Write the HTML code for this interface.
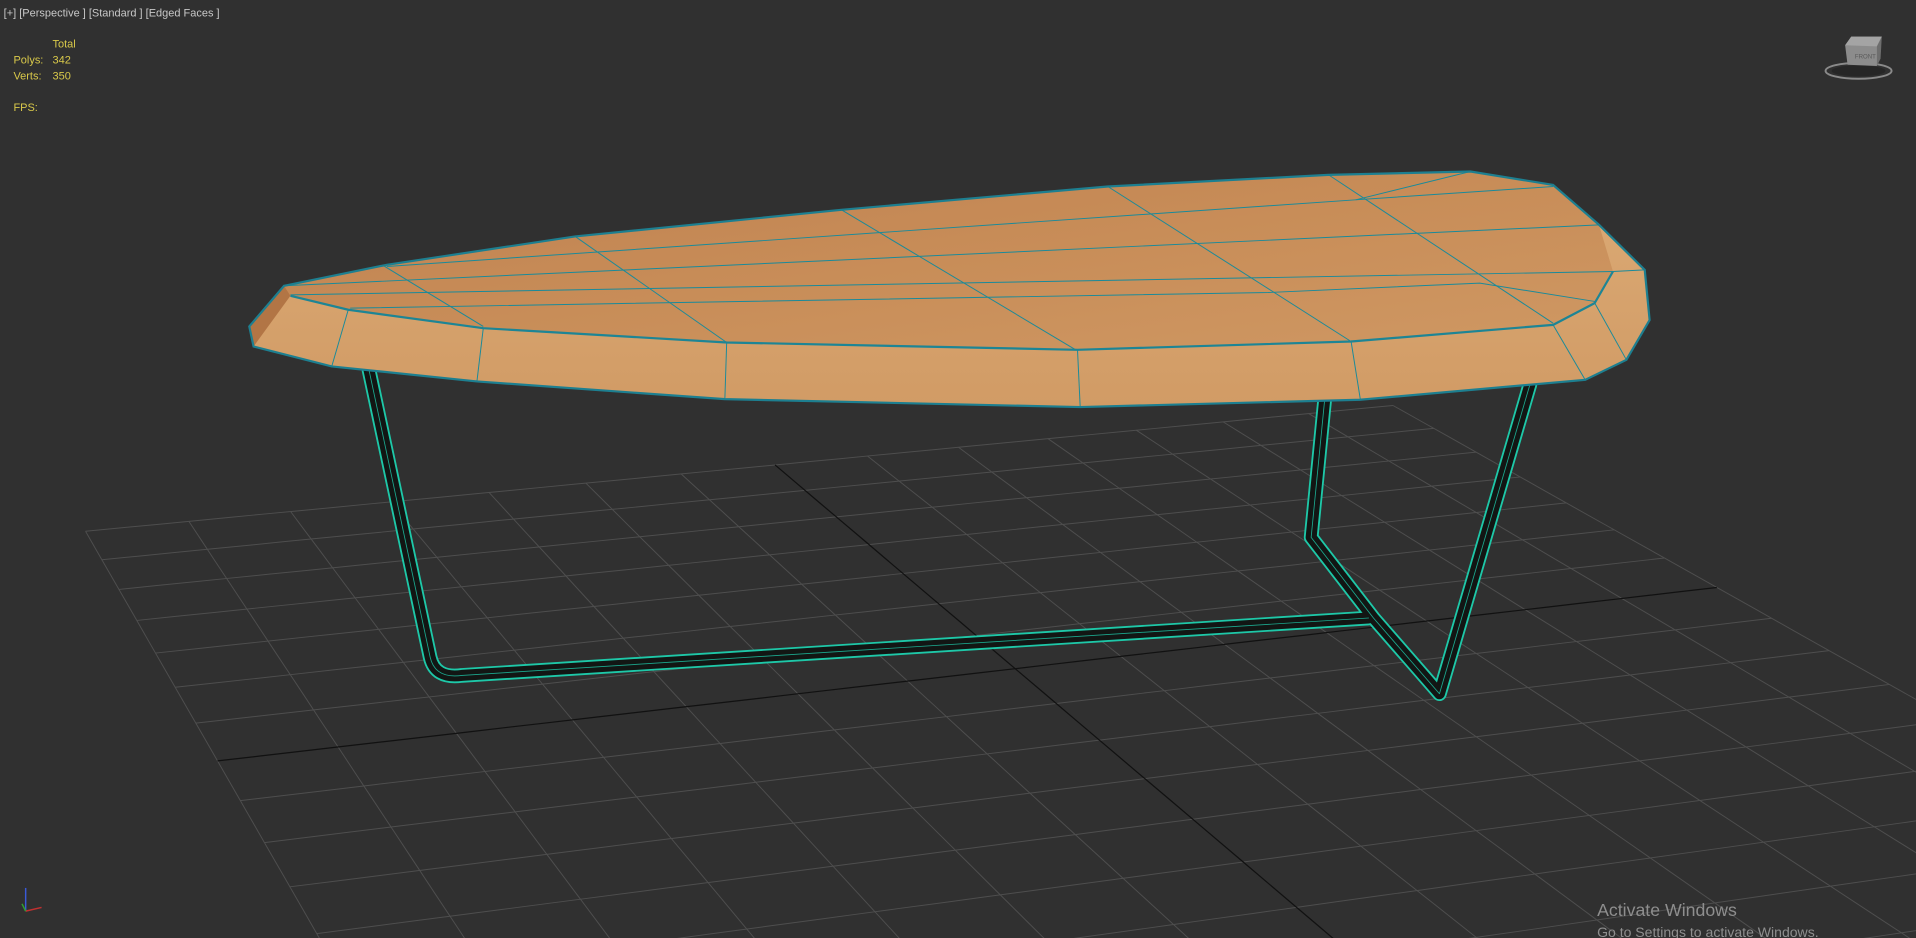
<!DOCTYPE html>
<html><head><meta charset="utf-8"><style>
html,body{margin:0;padding:0;background:#303030;overflow:hidden;width:1916px;height:938px}
svg{display:block}
</style></head><body>
<svg id="s" width="1916" height="938" viewBox="0 0 1568 768" preserveAspectRatio="none" xmlns="http://www.w3.org/2000/svg" style="overflow:hidden">
<defs>
<linearGradient id="top" x1="0" y1="0" x2="1" y2="1">
<stop offset="0" stop-color="#bf8150"/><stop offset="0.5" stop-color="#c88d58"/><stop offset="1" stop-color="#cf9863"/>
</linearGradient>
<linearGradient id="side" x1="0" y1="0" x2="0" y2="1">
<stop offset="0" stop-color="#dcab76"/><stop offset="1" stop-color="#d19b65"/>
</linearGradient>
</defs>
<rect width="1568" height="768" fill="#303030"/>
<g id="grid" stroke="#4e4e4e" stroke-width="0.8" fill="none"></g>
<g id="axes" stroke="#111" stroke-width="1" fill="none"></g>

<!-- legs -->
<g fill="none" stroke-linejoin="round" stroke-linecap="round">
<path d="M302,303 L352,538 Q356,556 378,553 L1120,506 M1084,328 L1073,440 L1124,506 L1178,568 L1252,315" stroke="#1ec8a8" stroke-width="12"/>
<path d="M302,303 L352,538 Q356,556 378,553 L1120,506 M1084,328 L1073,440 L1124,506 L1178,568 L1252,315" stroke="#121614" stroke-width="9"/>
<path d="M302,303 L352,538 Q356,556 378,553 L1120,506 M1084,328 L1073,440 L1124,506 L1178,568 L1252,315" stroke="#1ca88e" stroke-width="0.7"/>
</g>

<!-- table -->
<polygon points="232.5,234 316.6,216.8 470.7,193.6 688.6,171.8 906.6,152.7 1087,143.2 1203.4,140.4 1271,151.4 1308.6,184.1 1346,221 1350,262 1331,294.6 1297.3,311 1113,327.3 884,333.3 593.2,326.8 390.3,312.3 271.5,300 207.5,283.7 204,267.3" fill="url(#side)"/>
<polygon points="232.5,234 316.6,216.8 470.7,193.6 688.6,171.8 906.6,152.7 1087,143.2 1203.4,140.4 1271,151.4 1308.6,184.1 1320,222.3 1305,248.2 1271,266 1105.7,279.6 881.8,286.4 594.7,280.4 395.5,268.7 285,253.6 237.7,242.2" fill="url(#top)"/>
<polygon points="204,267.3 232.5,234 237.7,242.2 207.5,283.7" fill="#b27545"/>
<g stroke="#1a8a9a" stroke-width="0.8" fill="none">
<polyline points="316.6,218.2 1109.5,163.6 1271,152.7"/>
<polyline points="232.5,234 1308.6,184.1"/>
<polyline points="237.7,241.4 1320,222.3"/>
<polyline points="286.6,252.3 1038,239.5 1211,231.8 1305,246.8"/>
<polyline points="1109.5,163.6 1203.4,140.4"/>
<line x1="313" y1="217" x2="395.5" y2="267.3"/>
<line x1="470.7" y1="193.6" x2="594.7" y2="280.4"/>
<line x1="688.6" y1="171.8" x2="880.3" y2="286.4"/>
<line x1="906.6" y1="152.7" x2="1105.7" y2="279.6"/>
<line x1="1087" y1="143" x2="1271" y2="264.6"/>
<line x1="285" y1="253.6" x2="271.5" y2="300"/>
<line x1="395.5" y1="268.7" x2="390.3" y2="312.3"/>
<line x1="594.7" y1="280.4" x2="593.2" y2="326.8"/>
<line x1="881.8" y1="286.4" x2="884" y2="333.3"/>
<line x1="1105.7" y1="279.6" x2="1113.3" y2="327.3"/>
<line x1="1271" y1="266" x2="1297.3" y2="311"/>
<line x1="1305" y1="248" x2="1331" y2="294.6"/>
<line x1="1320" y1="222.3" x2="1346" y2="221"/>
</g>
<polyline points="237.7,242.2 285,253.6 395.5,268.7 594.7,280.4 881.8,286.4 1105.7,279.6 1271,266 1305,248.2 1320,222.3" fill="none" stroke="#1d8595" stroke-width="1.8"/>
<polygon points="232.5,234 316.6,216.8 470.7,193.6 688.6,171.8 906.6,152.7 1087,143.2 1203.4,140.4 1271,151.4 1308.6,184.1 1346,221 1350,262 1331,294.6 1297.3,311 1113,327.3 884,333.3 593.2,326.8 390.3,312.3 271.5,300 207.5,283.7 204,267.3" fill="none" stroke="#1d7f90" stroke-width="1.8"/>

<!-- text overlays -->
<g font-family="Liberation Sans, sans-serif" font-size="9">
<text x="3" y="13.5" fill="#c8c8c8">[+] [Perspective ] [Standard ] [Edged Faces ]</text>
<text x="43" y="39" fill="#d9c94a">Total</text>
<text x="11" y="52" fill="#d9c94a">Polys:</text><text x="43" y="52" fill="#d9c94a">342</text>
<text x="11" y="65" fill="#d9c94a">Verts:</text><text x="43" y="65" fill="#d9c94a">350</text>
<text x="11" y="91" fill="#d9c94a">FPS:</text>
</g>

<!-- view cube -->
<g>
<ellipse cx="1521" cy="58" rx="27" ry="6.5" fill="none" stroke="#8a8a8a" stroke-width="1.6"/>
<ellipse cx="1521" cy="58" rx="22" ry="4.5" fill="#262626"/>
<polygon points="1510,37 1515,30 1540,30 1537,40 1536,54 1512,53" fill="#8c8c8c"/>
<polygon points="1510,37 1515,30 1540,30 1536,38" fill="#a4a4a4"/>
<polygon points="1536,38 1540,30 1539,48 1536,54" fill="#6e6e6e"/>
<text x="1518" y="48" font-family="Liberation Sans, sans-serif" font-size="5" fill="#5a5a5a">FRONT</text>
</g>

<!-- axis gizmo -->
<g stroke-width="1.2">
<line x1="21" y1="746" x2="21" y2="727" stroke="#3a5ad8"/>
<line x1="21" y1="746" x2="34" y2="743" stroke="#c03030"/>
<line x1="21" y1="746" x2="18" y2="740" stroke="#30a030"/>
</g>

<text x="1307" y="750" font-family="Liberation Sans, sans-serif" font-size="14.5" fill="#8e8e8e">Activate Windows</text>
<text x="1307" y="767" font-family="Liberation Sans, sans-serif" font-size="11.5" fill="#8e8e8e">Go to Settings to activate Windows.</text>
</svg>
<script>
(function(){
var src=[[-1,-1],[1,-1],[-1,0],[1,0]];
var dst=[[70,435],[1140,332],[178,623],[1405,481]];
var A=[],b=[];
for(var i=0;i<4;i++){var u=src[i][0],v=src[i][1],x=dst[i][0],y=dst[i][1];
A.push([u,v,1,0,0,0,-u*x,-v*x]);b.push(x);
A.push([0,0,0,u,v,1,-u*y,-v*y]);b.push(y);}
var n=8;for(var c=0;c<n;c++){var p=c;for(var r=c+1;r<n;r++)if(Math.abs(A[r][c])>Math.abs(A[p][c]))p=r;
var t=A[c];A[c]=A[p];A[p]=t;t=b[c];b[c]=b[p];b[p]=t;
for(var r=0;r<n;r++){if(r===c)continue;var f=A[r][c]/A[c][c];for(var k=c;k<n;k++)A[r][k]-=f*A[c][k];b[r]-=f*b[c];}}
var h=[];for(var i=0;i<n;i++)h.push(b[i]/A[i][i]);
function P(u,v){var w=h[6]*u+h[7]*v+1;return [(h[0]*u+h[1]*v+h[2])/w,(h[3]*u+h[4]*v+h[5])/w,w];}
var ns="http://www.w3.org/2000/svg",g=document.getElementById('grid'),ax=document.getElementById('axes');
function seg(g,u1,v1,u2,v2){var pts=[];var N=40;for(var i=0;i<=N;i++){var u=u1+(u2-u1)*i/N,v=v1+(v2-v1)*i/N;var q=P(u,v);if(q[2]<=0.02)break;
var x=Math.max(-50,Math.min(1620,q[0])),y=Math.max(-50,Math.min(820,q[1]));pts.push(x.toFixed(1)+','+y.toFixed(1));}
var pl=document.createElementNS(ns,'polyline');pl.setAttribute('points',pts.join(' '));g.appendChild(pl);}
var s=1/7,vmax=3;
for(var i=-7;i<=7;i++){if(i===0)continue;seg(g,i*s,-1,i*s,vmax);}
for(var j=-7;j<=21;j++){if(j===0)continue;seg(g,-1,j*s,1,j*s);}
seg(ax,0,-1,0,vmax);seg(ax,-1,0,1,0);
})();
</script>
</body></html>
